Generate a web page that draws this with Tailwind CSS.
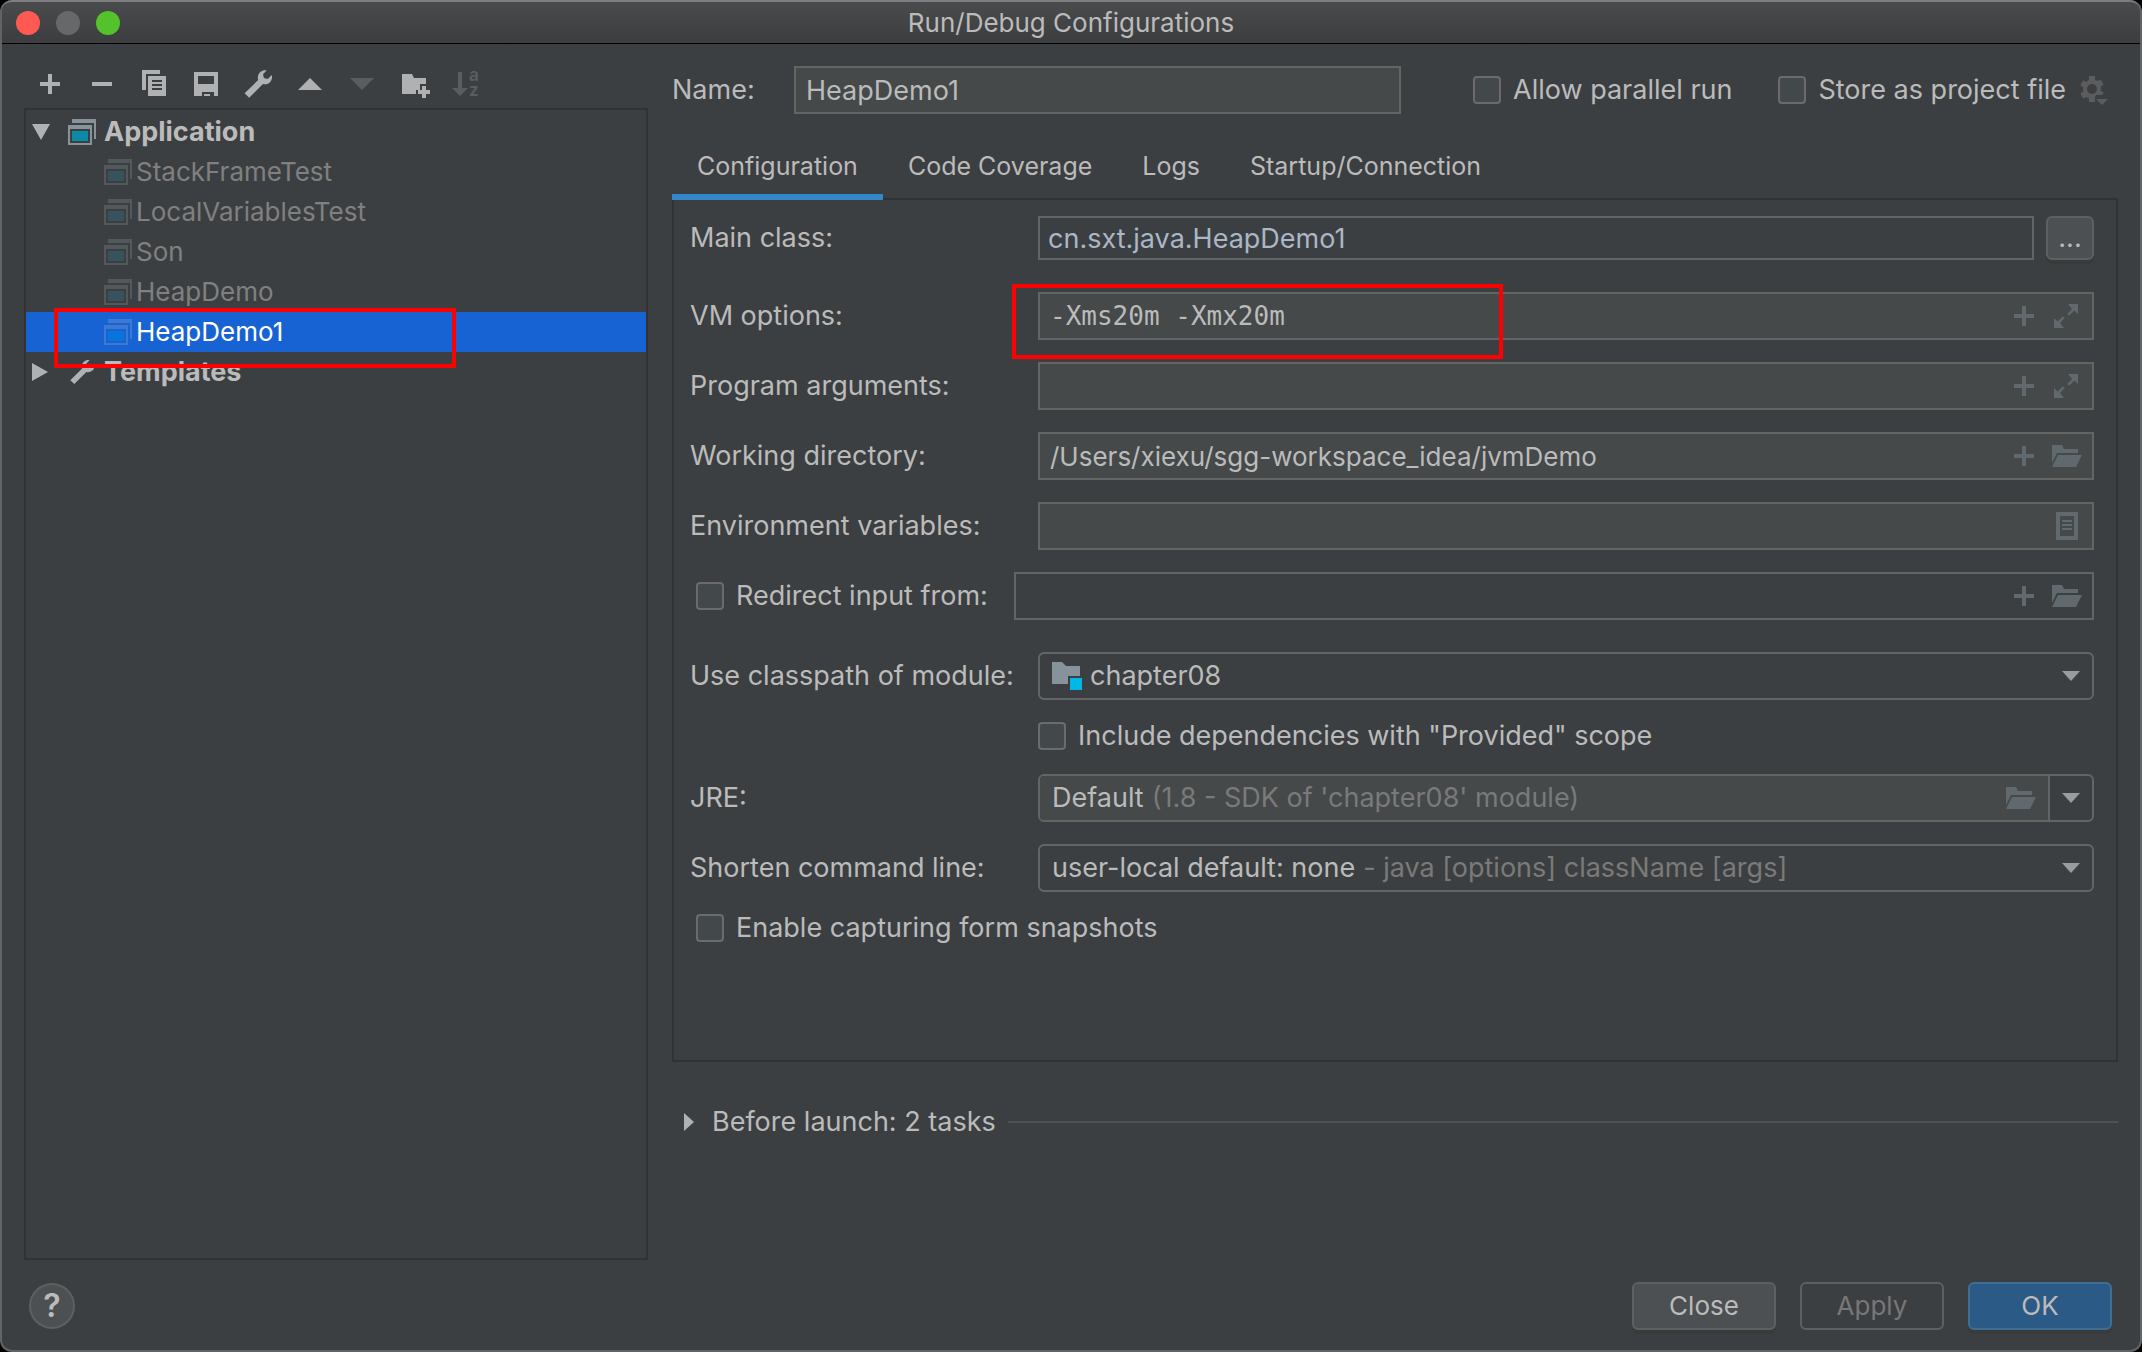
<!DOCTYPE html>
<html lang="en">
<head>
<meta charset="utf-8">
<meta name="viewport" content="width=device-width, initial-scale=1">
<title>Run/Debug Configurations</title>
<script src="https://cdn.jsdelivr.net/npm/@tailwindcss/browser@4"></script>
</head>
<body class="bg-black">
<!-- Shared icon symbols -->
<svg class="hidden" aria-hidden="true">
  <symbol id="plus" viewBox="0 0 20 20"><path fill="currentColor" d="M12 8V0H8v8H0v4h8v8h4v-8h8V8z"/></symbol>
  <symbol id="wrench" viewBox="0 0 32 32"><path fill="currentColor" d="M24.600 2.500L21 6.200l.9 3.800 3.800 1.100 4-4.100c.9 3.100-.1 6-2.200 7.700-2 1.500-4.400 1.800-6.500 1.200L7.200 29.700 2.600 25.300 16.200 12c-1-3 0-6.100 2.200-7.900 1.900-1.600 4.200-2.100 6.200-1.600z"/></symbol>
  <symbol id="app" viewBox="0 0 28 26"><path fill="#87939a" d="M4 0h24v20h-2V4H4z"/><path fill="#87939a" fill-rule="evenodd" d="M0 6h24v20H0zm2 4v14h20V10z"/><path fill="#0e8aa8" d="M4 12h16v10H4z"/></symbol>
  <symbol id="appdim" viewBox="0 0 28 26"><path fill="#53585b" d="M4 0h24v20h-2V4H4z"/><path fill="#53585b" fill-rule="evenodd" d="M0 6h24v20H0zm2 4v14h20V10z"/><path fill="#37545e" d="M4 12h16v10H4z"/></symbol>
  <symbol id="appsel" viewBox="0 0 28 26"><path fill="#3f78d0" d="M4 0h24v20h-2V4H4z"/><path fill="#3f78d0" fill-rule="evenodd" d="M0 6h24v20H0zm2 4v14h20V10z"/><path fill="#0775da" d="M4 12h16v10H4z"/></symbol>
  <symbol id="folder" viewBox="0 0 30 22"><path fill="currentColor" d="M0 0h10l2 4h14v4H5L0 18z"/><path fill="currentColor" d="M6 10h24l-6 12H0z"/></symbol>
  <symbol id="expand" viewBox="0 0 24 24"><path fill="currentColor" d="M14 0h10v10l-3.600-3.600-5.400 5.300-1.700-1.700L18 5zM0 14l3.600 3.600 5.400-5.300 1.700 1.700L6 19l4 5H0z"/></symbol>
  <symbol id="doc" viewBox="0 0 22 28"><path fill="currentColor" fill-rule="evenodd" d="M0 0h22v28H0zm4 4v20h14V4z"/><path fill="currentColor" d="M6 8h10v2H6zm0 4h10v2H6zm0 4h10v2H6z"/></symbol>
  <symbol id="down" viewBox="0 0 18 10"><path fill="currentColor" d="M0 0h18L9 10z"/></symbol>
</svg>

<div class="flex min-h-screen flex-col rounded-[12px] border-2 border-t-0 border-[#616466] bg-[#3c3f41] font-[Inter,sans-serif] text-[26px] leading-8 text-[#bbbbbb]">
  <header class="relative flex h-11 items-center justify-center rounded-t-[10px] border-t-2 border-b border-t-[#7d7f81] border-b-black bg-linear-to-b from-[#4a4b4d] to-[#3c3d3f]">
    <div class="absolute left-3.5 flex gap-4">
      <button aria-label="Close window" class="size-6 rounded-full bg-[#ff5a52]"></button>
      <button aria-label="Minimize window" class="size-6 rounded-full bg-[#67686a]"></button>
      <button aria-label="Zoom window" class="size-6 rounded-full bg-[#53c22b]"></button>
    </div>
    <h1>Run/Debug Configurations</h1>
  </header>

  <div class="flex grow gap-6 px-[22px]">
    <!-- Configuration tree -->
    <aside class="flex w-[624px] shrink-0 flex-col pt-6">
      <div class="flex gap-5 px-2.5 text-[#afb1b3]">
        <button aria-label="Add" class="flex size-8 items-center justify-center"><svg class="size-5"><use href="#plus"/></svg></button>
        <button aria-label="Remove" class="flex size-8 items-center justify-center"><span class="h-1 w-5 bg-current"></span></button>
        <button aria-label="Copy"><svg class="size-8" viewBox="0 0 32 32"><path fill="currentColor" d="M4 2h18v4H8v16H4z"/><path fill="currentColor" fill-rule="evenodd" d="M10 8h18v20H10zm4 4v2h10v-2zm0 4v2h10v-2zm0 4v2h10v-2z"/></svg></button>
        <button aria-label="Save"><svg class="size-8" viewBox="0 0 32 32"><path fill="currentColor" fill-rule="evenodd" d="M4 4h24v24h-4v-4H12v4H4zm4 4v8h16V8z"/><path fill="currentColor" d="M14 26h6v2h-6z"/></svg></button>
        <button aria-label="Edit templates"><svg class="size-8"><use href="#wrench"/></svg></button>
        <button aria-label="Move up"><svg class="size-8" viewBox="0 0 32 32"><path fill="currentColor" d="M4 22h24L16 10z"/></svg></button>
        <button aria-label="Move down" disabled class="text-[#5a5c5d]"><svg class="size-8" viewBox="0 0 32 32"><path fill="currentColor" d="M4 10h24L16 22z"/></svg></button>
        <button aria-label="Create folder"><svg class="size-8" viewBox="0 0 32 32"><path fill="currentColor" d="M4 6h10l2 4h12v6h-6v6h-4v4H4z"/><path fill="currentColor" d="M24 18h4v4h4v4h-4v4h-4v-4h-4v-4h4z"/></svg></button>
        <button aria-label="Sort" disabled class="text-[#5a5c5d]"><svg class="size-8 overflow-visible" viewBox="0 0 32 32"><path fill="currentColor" d="M8 4h4v16h6l-8 8-8-8h6z"/><g fill="currentColor" font-family="Inter" font-size="17" font-weight="700"><text x="19" y="13">a</text><text x="19" y="28">z</text></g></svg></button>
      </div>
      <ul class="mt-2 grow border-2 border-[#323232] py-0.5 leading-10">
        <li class="flex h-10 items-center gap-[18px] pl-1.5 text-[27px] font-bold">
          <svg class="h-4 w-[18px] shrink-0" viewBox="0 0 18 16"><path fill="#afb1b3" d="M0 0h18L9 16z"/></svg>
          <span class="flex items-center gap-2"><svg class="h-[26px] w-7"><use href="#app"/></svg>Application</span>
        </li>
        <li class="flex h-10 items-center gap-1 pl-[78px] text-[#808080]"><svg class="h-[26px] w-7"><use href="#appdim"/></svg>StackFrameTest</li>
        <li class="flex h-10 items-center gap-1 pl-[78px] text-[#808080]"><svg class="h-[26px] w-7"><use href="#appdim"/></svg>LocalVariablesTest</li>
        <li class="flex h-10 items-center gap-1 pl-[78px] text-[#808080]"><svg class="h-[26px] w-7"><use href="#appdim"/></svg>Son</li>
        <li class="flex h-10 items-center gap-1 pl-[78px] text-[#808080]"><svg class="h-[26px] w-7"><use href="#appdim"/></svg>HeapDemo</li>
        <li class="relative flex h-10 items-center gap-1 bg-[#1863d4] pl-[78px] text-white"><svg class="h-[26px] w-7"><use href="#appsel"/></svg>HeapDemo1
          <span class="absolute -top-1 left-7 z-10 h-[60px] w-[402px] border-4 border-[#ff0000]"></span>
        </li>
        <li class="flex h-10 items-center gap-5 pl-1.5 text-[27px] font-bold">
          <svg class="h-[18px] w-4 shrink-0" viewBox="0 0 16 18"><path fill="#afb1b3" d="M0 0v18l16-9z"/></svg>
          <span class="flex items-center gap-2"><svg class="size-7 text-[#afb1b3]"><use href="#wrench"/></svg>Templates</span>
        </li>
      </ul>
    </aside>

    <!-- Configuration editor -->
    <main class="flex min-w-0 grow flex-col pt-[22px] text-[27px]">
      <div class="flex h-12 items-center pr-2">
        <label for="name" class="w-[122px] shrink-0">Name:</label>
        <input id="name" value="HeapDemo1" class="h-12 min-w-0 grow border-2 border-[#646464] bg-[#45494a] px-2.5">
        <label class="ml-[72px] flex shrink-0 items-center gap-3"><input type="checkbox" class="size-7 appearance-none rounded border-2 border-[#6b6b6b] bg-[#43494a]">Allow parallel run</label>
        <label class="ml-[46px] flex shrink-0 items-center gap-3"><input type="checkbox" class="size-7 appearance-none rounded border-2 border-[#6b6b6b] bg-[#43494a]">Store as project file</label>
        <button aria-label="Storage options" class="ml-3 shrink-0 text-[#5a5c5d]"><svg class="size-8" viewBox="0 0 32 32"><path fill="currentColor" fill-rule="evenodd" d="M11 2h6v3.600l2.600 1.500 3.200-1.700 2.800 5-2.800 2v4.300l2.800 1.800-1.500 2.500H18l-1 1.500V28h-6v-3.600l-2.600-1.500-3.200 1.700-2.900-5 2.900-2v-4.300l-2.900-2 2.900-5 3.200 1.700L11 5.600zm3 8a5 5 0 1 0 0 10 5 5 0 0 0 0-10z"/><path fill="currentColor" d="M18 25h12l-6 6z"/></svg></button>
      </div>

      <nav class="relative z-10 mt-6 flex h-[62px] text-[25px]">
        <button class="border-b-6 border-[#3287c9] px-[25px]">Configuration</button>
        <button class="border-b-6 border-transparent px-[25px]">Code Coverage</button>
        <button class="border-b-6 border-transparent px-[25px]">Logs</button>
        <button class="border-b-6 border-transparent px-[25px]">Startup/Connection</button>
      </nav>

      <form class="-mt-0.5 flex flex-col gap-[22px] border-2 border-[#323232] px-[22px] pt-4 pb-[118px] pl-4">
        <div class="mb-2.5 grid grid-cols-[348px_1fr_48px] items-center">
          <label for="mainclass">Main class:</label>
          <input id="mainclass" value="cn.sxt.java.HeapDemo1" class="mr-3 h-11 min-w-0 border-2 border-[#646464] bg-transparent px-2 text-[#a9b7c6]">
          <button type="button" aria-label="Browse class" class="h-11 rounded-md border-2 border-[#5e6060] bg-[#4c5052] leading-9 shadow-[0_4px_0_#393a3b]">...</button>
        </div>
        <div class="relative grid grid-cols-[348px_1fr] items-center">
          <label for="vm">VM options:</label>
          <div class="flex h-12 items-center border-2 border-[#646464] bg-[#45494a] pr-2.5 text-[#5f696e]">
            <input id="vm" value="-Xms20m -Xmx20m" class="h-full min-w-0 grow bg-transparent pl-2.5 font-['DejaVu_Sans_Mono',monospace] text-[26px] text-[#bbbbbb]">
            <button type="button" aria-label="Insert macro" class="mr-4"><svg class="size-5"><use href="#plus"/></svg></button>
            <button type="button" aria-label="Expand" class="flex w-8 justify-center"><svg class="size-6"><use href="#expand"/></svg></button>
          </div>
          <span class="pointer-events-none absolute -top-2 left-[322px] h-[75px] w-[491px] border-4 border-[#ff0000]"></span>
        </div>
        <div class="grid grid-cols-[348px_1fr] items-center">
          <label for="args">Program arguments:</label>
          <div class="flex h-12 items-center border-2 border-[#646464] bg-[#45494a] pr-2.5 text-[#5f696e]">
            <input id="args" class="h-full min-w-0 grow bg-transparent pl-2.5 text-[#bbbbbb]">
            <button type="button" aria-label="Insert macro" class="mr-4"><svg class="size-5"><use href="#plus"/></svg></button>
            <button type="button" aria-label="Expand" class="flex w-8 justify-center"><svg class="size-6"><use href="#expand"/></svg></button>
          </div>
        </div>
        <div class="grid grid-cols-[348px_1fr] items-center">
          <label for="dir">Working directory:</label>
          <div class="flex h-12 items-center border-2 border-[#646464] bg-[#45494a] pr-2.5 text-[#5f696e]">
            <input id="dir" value="/Users/xiexu/sgg-workspace_idea/jvmDemo" class="h-full min-w-0 grow bg-transparent pl-2.5 text-[26px] text-[#bbbbbb]">
            <button type="button" aria-label="Insert macro" class="mr-4"><svg class="size-5"><use href="#plus"/></svg></button>
            <button type="button" aria-label="Browse" class="flex w-8 justify-end"><svg class="h-[22px] w-[30px]"><use href="#folder"/></svg></button>
          </div>
        </div>
        <div class="grid grid-cols-[348px_1fr] items-center">
          <label for="env">Environment variables:</label>
          <div class="flex h-12 items-center border-2 border-[#646464] bg-[#45494a] pr-2.5 text-[#5f696e]">
            <input id="env" class="h-full min-w-0 grow bg-transparent pl-2.5 text-[#bbbbbb]">
            <button type="button" aria-label="Edit variables" class="flex w-8 justify-end pr-1"><svg class="h-7 w-[22px]"><use href="#doc"/></svg></button>
          </div>
        </div>
        <div class="mb-2.5 grid grid-cols-[324px_1fr] items-center">
          <label class="flex items-center gap-3 pl-1.5"><input type="checkbox" class="size-7 appearance-none rounded border-2 border-[#6b6b6b] bg-[#43494a]">Redirect input from:</label>
          <div class="flex h-12 items-center border-2 border-[#646464] pr-2.5 text-[#5f696e]">
            <input aria-label="Redirect input from" class="h-full min-w-0 grow bg-transparent pl-2.5 text-[#bbbbbb]">
            <button type="button" aria-label="Insert macro" class="mr-4"><svg class="size-5"><use href="#plus"/></svg></button>
            <button type="button" aria-label="Browse" class="flex w-8 justify-end"><svg class="h-[22px] w-[30px]"><use href="#folder"/></svg></button>
          </div>
        </div>
        <div class="grid grid-cols-[348px_1fr] items-center">
          <label for="module">Use classpath of module:</label>
          <div class="flex h-12 items-center rounded-md border-2 border-[#646464] pr-3 pl-3">
            <svg class="h-7 w-[30px] shrink-0" viewBox="0 0 30 28"><path fill="#87939a" d="M0 0h10l4 4h14v10H16v8H0z"/><path fill="#00b8e6" d="M18 16h12v12H18z"/></svg>
            <select id="module" class="h-full min-w-0 grow appearance-none pl-2"><option>chapter08</option></select>
            <svg class="h-2.5 w-[18px] text-[#9a9da0]"><use href="#down"/></svg>
          </div>
        </div>
        <label class="flex h-7 items-center gap-3 pl-[348px]"><input type="checkbox" class="size-7 appearance-none rounded border-2 border-[#6b6b6b] bg-[#43494a]">Include dependencies with "Provided" scope</label>
        <div class="mt-0.5 grid grid-cols-[348px_1fr] items-center">
          <label for="jre">JRE:</label>
          <div class="flex h-12 items-center rounded-md border-2 border-[#646464] pr-3">
            <div class="flex h-full grow items-center rounded-l border-r-2 border-[#646464] bg-[#45494a] pr-3 pl-3">
              <select id="jre" class="appearance-none [field-sizing:content]"><option>Default</option></select>
              <span class="ml-2 grow text-[#7a7a7a]">(1.8 - SDK of 'chapter08' module)</span>
              <button type="button" aria-label="Browse" class="text-[#5f696e]"><svg class="h-[22px] w-[30px]"><use href="#folder"/></svg></button>
            </div>
            <svg class="ml-3 h-2.5 w-[18px] text-[#9a9da0]"><use href="#down"/></svg>
          </div>
        </div>
        <div class="grid grid-cols-[348px_1fr] items-center">
          <label for="shorten">Shorten command line:</label>
          <div class="flex h-12 items-center rounded-md border-2 border-[#646464] pr-3 pl-3">
            <select id="shorten" class="appearance-none [field-sizing:content]"><option>user-local default: none</option></select>
            <span class="ml-2 grow text-[#7a7a7a]">- java [options] className [args]</span>
            <svg class="h-2.5 w-[18px] text-[#9a9da0]"><use href="#down"/></svg>
          </div>
        </div>
        <label class="flex h-7 items-center gap-3 pl-1.5"><input type="checkbox" class="size-7 appearance-none rounded border-2 border-[#6b6b6b] bg-[#43494a]">Enable capturing form snapshots</label>
      </form>

      <div class="mt-11 flex items-center gap-3">
        <button class="flex items-center gap-[18px] pl-3"><svg class="h-[18px] w-2.5" viewBox="0 0 10 18"><path fill="#afb1b3" d="M0 0v18l10-9z"/></svg>Before launch: 2 tasks</button>
        <hr class="grow border-t-2 border-[#4f5152]">
      </div>
    </main>
  </div>

  <footer class="flex items-center gap-6 pt-[22px] pr-7 pb-5 pl-[27px]">
    <button aria-label="Help" class="mr-auto size-[46px] rounded-full border-2 border-[#5e6060] bg-[#4c5052] text-[32px] font-semibold">?</button>
    <button class="h-12 w-36 rounded-md border-2 border-[#5e6060] bg-[#4c5052] shadow-[0_4px_0_#393a3b]">Close</button>
    <button disabled class="h-12 w-36 rounded-md border-2 border-[#5e6060] text-[#777777]">Apply</button>
    <button class="h-12 w-36 rounded-md border-2 border-[#3e6f93] bg-[#2b5a86] shadow-[0_4px_0_#393a3b]">OK</button>
  </footer>
</div>
</body>
</html>
